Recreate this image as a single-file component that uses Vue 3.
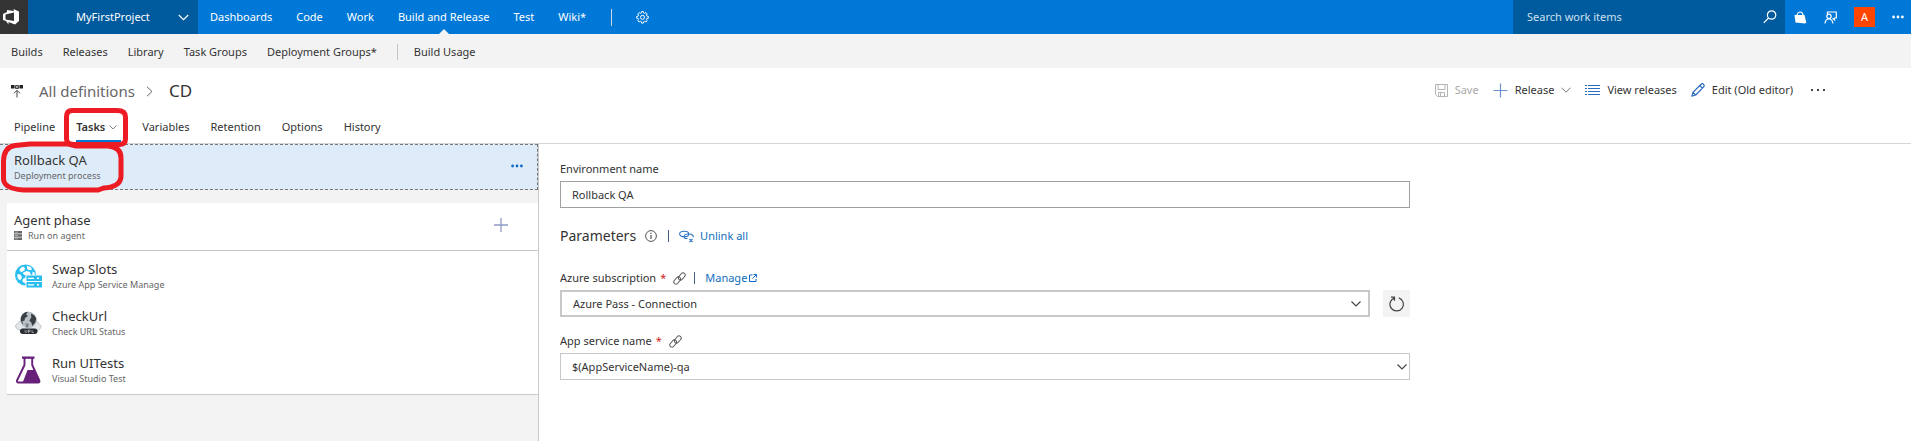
<script setup>
import { ref } from 'vue'

const mainNav = [
  { label: 'Dashboards' },
  { label: 'Code' },
  { label: 'Work' },
  { label: 'Build and Release', active: true },
  { label: 'Test' },
  { label: 'Wiki*' },
]
const subNav = ['Builds', 'Releases', 'Library', 'Task Groups', 'Deployment Groups*']
const tabsAfter = ['Variables', 'Retention', 'Options', 'History']
const tasks = [
  { icon: 'azure', name: 'Swap Slots', kind: 'Azure App Service Manage' },
  { icon: 'globe', name: 'CheckUrl', kind: 'Check URL Status' },
  { icon: 'flask', name: 'Run UITests', kind: 'Visual Studio Test' },
]
const environment = ref('Rollback QA')
const subscription = ref('Azure Pass - Connection')
const service = ref('$(AppServiceName)-qa')
</script>

<template>
  <div class="page">
    <header class="topbar">
      <a class="logo" href="#" aria-label="Home">
        <svg width="16" height="16" viewBox="0 0 16 16"><path fill="#fff" fill-rule="evenodd" d="M0 5 4 3V1L11 2 10.500 0 16 2.500V12L12 15.500 5.500 13V15.500L3 12 0 11ZM2.500 5.500V10.600L11 12V3.500Z"/></svg>
      </a>
      <button class="project" type="button">
        <span>MyFirstProject</span>
        <svg width="11" height="7" viewBox="0 0 11 7"><path class="line" d="M.8 1 5.5 5.6 10.2 1"/></svg>
      </button>
      <nav class="main-nav">
        <a v-for="n in mainNav" :key="n.label" href="#" :class="{ active: n.active }">{{ n.label }}</a>
        <span class="divider"></span>
        <button class="gear" type="button" aria-label="Settings">
          <svg width="13" height="13" viewBox="0 0 13 13"><path fill="none" stroke="#fff" stroke-width="1" stroke-linejoin="round" d="M5.600.600h1.800l.3 1.400.9.4 1.300-.8 1.300 1.300-.8 1.300.4.9 1.500.3v1.800l-1.500.3-.4.9.8 1.300-1.300 1.300-1.300-.8-.9.4-.3 1.500H5.600l-.3-1.500-.9-.4-1.300.8-1.300-1.300.8-1.300-.4-.9L.7 7.200V5.400l1.500-.3.4-.9-.8-1.300 1.300-1.300 1.300.8.9-.4Z"/><circle cx="6.500" cy="6.300" r="2" fill="none" stroke="#fff"/></svg>
        </button>
      </nav>
      <div class="search">
        <input type="text" placeholder="Search work items" aria-label="Search work items" />
        <svg width="14" height="14" viewBox="0 0 14 14"><circle class="line" cx="8.600" cy="5" r="4.200"/><path class="line" d="M5.500 8 .8 12.800"/></svg>
      </div>
      <div class="account">
        <button type="button" aria-label="Marketplace">
          <svg width="13" height="13" viewBox="0 0 13 13"><path fill="#fff" d="M.500 4 10.500 4 12.300 11.500 11 12.500 1.500 11.500Z"/><path fill="none" stroke="#fff" stroke-width="1.200" d="M3 4.500C3 2.500 5 .8 6.500 1 8.400 1.300 9 3 9 4.500"/></svg>
        </button>
        <button type="button" aria-label="Feedback">
          <svg width="13" height="13" viewBox="0 0 13 13"><path class="line" d="M3.500 3V1H12.300V7H10.500V9L8.500 7.200"/><circle class="line" cx="5" cy="5.300" r="2.200"/><path class="line" d="M1 12.500C1.300 9.500 3 8 5 8s3.500 1.500 4 4.500"/></svg>
        </button>
        <button class="avatar" type="button">A</button>
        <button type="button" aria-label="More">
          <svg width="12" height="4" viewBox="0 0 12 4"><g fill="#fff"><circle cx="1.600" cy="2" r="1.400"/><circle cx="6" cy="2" r="1.400"/><circle cx="10.400" cy="2" r="1.400"/></g></svg>
        </button>
      </div>
    </header>

    <nav class="sub-nav">
      <a v-for="s in subNav" :key="s" href="#">{{ s }}</a>
      <a class="separated" href="#">Build Usage</a>
    </nav>

    <div class="title-row">
      <svg class="release-icon" width="12" height="13" viewBox="0 0 12 13"><path fill="#222" d="M0 0h3.500v3.500H0ZM8.500 0H12v3.500H8.500Z"/><path fill="none" stroke="#444" d="M3.500 2h5M4.500.500h3v3h-3ZM6 12.500V5.500M3 8.300 6 5.300l3 3"/></svg>
      <a class="crumb" href="#">All definitions</a>
      <svg class="crumb-arrow" width="7" height="11" viewBox="0 0 7 11"><path fill="none" stroke="#666" d="M1 .8 6 5.500 1 10.200"/></svg>
      <h1>CD</h1>
      <div class="toolbar">
        <button class="save" type="button" disabled>
          <svg width="13" height="13" viewBox="0 0 13 13"><path fill="none" stroke="#b4b4b4" d="M.500.500h12v12h-10l-2-2ZM3 .500v5h7v-5M3.500 12.500v-4h6v4M5.500 9v3"/></svg>
          Save
        </button>
        <button class="release" type="button">
          <svg width="15" height="15" viewBox="0 0 15 15"><path fill="none" stroke="#6f93cf" stroke-width="1.200" d="M7.500.500v14M.500 7.500h14"/></svg>
          Release
          <svg width="10" height="6" viewBox="0 0 10 6"><path fill="none" stroke="#777" d="M.500.700 5 5.200 9.500.700"/></svg>
        </button>
        <button class="view" type="button">
          <svg width="15" height="11" viewBox="0 0 15 11"><path fill="none" stroke="#2b6cc4" d="M0 .500h2M3 .500h12M0 3.500h2M3 3.500h12M0 6.500h2M3 6.500h12M0 9.500h2M3 9.500h12"/></svg>
          View releases
        </button>
        <button class="edit" type="button">
          <svg width="14" height="14" viewBox="0 0 14 14"><path fill="none" stroke="#2464bd" stroke-width="1.100" stroke-linejoin="round" d="M.800 13.200 2 9.300 9.800 1.500c1-1 2-1 2.800-.2s.8 1.800-.2 2.800L4.700 12ZM2 9.300 4.700 12M8.800 2.500l2.700 2.700"/></svg>
          Edit (Old editor)
        </button>
        <button class="more" type="button" aria-label="More actions">
          <svg width="14" height="2" viewBox="0 0 14 2"><path fill="#444" d="M0 0h2v2H0ZM6 0h2v2H6ZM12 0h2v2h-2Z"/></svg>
        </button>
      </div>
    </div>

    <nav class="tabs">
      <a href="#">Pipeline</a>
      <a class="current" href="#">
        Tasks
        <svg width="8" height="5" viewBox="0 0 8 5"><path fill="none" stroke="#888" d="M.500.500 4 4 7.500.500"/></svg>
        <svg class="mark" width="66" height="40" viewBox="0 0 66 40" aria-hidden="true"><path d="M9 2.500H54Q62.500 2.500 62.500 9V31Q62.500 36.500 56 36.500H11Q3.500 36.500 3.500 31V9Q3.500 2.500 9 2.500Z"/></svg>
      </a>
      <a v-for="t in tabsAfter" :key="t" href="#">{{ t }}</a>
    </nav>

    <main class="body">
      <section class="left">
        <div class="process">
          <div class="text">
            <h2>Rollback QA</h2>
            <p>Deployment process</p>
          </div>
          <button type="button" aria-label="Process options">
            <svg width="12" height="4" viewBox="0 0 12 4"><g fill="#1068c8"><circle cx="1.600" cy="2" r="1.400"/><circle cx="6" cy="2" r="1.400"/><circle cx="10.400" cy="2" r="1.400"/></g></svg>
          </button>
          <svg class="mark" width="126" height="52" viewBox="0 0 126 52" aria-hidden="true"><path d="M15 4.500 30 3H68L76 5H108Q121 6 121 17V36Q120 46 104 47L98 49H24Q4 48 3.500 38V20Q4 6 15 4.500Z"/></svg>
        </div>
        <div class="card">
          <div class="phase">
            <div class="text">
              <h2>Agent phase</h2>
              <p>
                <svg width="8" height="9" viewBox="0 0 8 9"><path fill="#666" d="M0 0h8v2.400H0ZM0 3.300h8v2.400H0ZM0 6.600h8V9H0Z"/><path stroke="#ddd" stroke-width=".6" d="M1 1.200h3M1 4.500h3M1 7.800h3"/></svg>
                Run on agent
              </p>
            </div>
            <button type="button" aria-label="Add task">
              <svg width="14" height="14" viewBox="0 0 14 14"><path fill="none" stroke="#8f9bc8" stroke-width="1.300" d="M7 0v14M0 7h14"/></svg>
            </button>
          </div>
          <ul>
            <li v-for="t in tasks" :key="t.name">
              <svg v-if="t.icon === 'azure'" width="27" height="28" viewBox="0 0 27 28">
                <circle cx="10.500" cy="13" r="10.500" fill="#29bdf0"/>
                <path fill="#fff" d="M5 6.500 8 4.500 10 6 9.500 8.500 6.500 10 4.500 9ZM12 3.800l4 1.500 1 2.500-3 .5-2-1.500ZM11.500 9l3.500 1 .8 3H9.500L7.500 11ZM2.500 12l3 .5 1.500 3-1.500 2.500-2-.5-1.200-2.500ZM17.500 9.500l2 1 .3 2.500h-2.500ZM8.500 16.500l2.500-1v6l-3-1.200-.8-2Z"/>
                <path fill="#fff" d="M10.500 12.800H27V26.500H10.500Z"/>
                <path fill="#29bdf0" d="M11.500 13.600H27v5.400H11.500ZM11.500 20H27v5.500H11.500Z"/>
                <path fill="#fff" d="M13 15.800h6v1.100h-6ZM22 15.500h2v1.600h-2ZM13 22.300h6v1.100h-6ZM22 22h2v1.600h-2Z"/>
              </svg>
              <svg v-else-if="t.icon === 'globe'" width="27" height="28" viewBox="0 0 27 28">
                <path fill="#e4e7ea" stroke="#adb3b8" stroke-width=".7" d="M6 11h15l5 6c.5 1.500-1 3-2.500 4L20 22.500H7L2.500 20C1 19 0 17.500.8 16Z"/>
                <circle cx="13.500" cy="11" r="8.300" fill="#b9c1c7"/>
                <path fill="#3a3f44" d="M6.500 7C8.500 3.500 11 3 13 2.800L11 5.500l2 1.500-3 2-.5 2.500-2.500 1 1.500 3C5.500 13.500 5.200 9.500 6.500 7ZM16 4.500l3.500 2 1.800 3-1 4-3 3.500-1-3.500-2-2 2-3Z"/>
                <path fill="#7b8288" d="M10.500 14l3.500 1-1 3.500h-2Z"/>
                <rect x="5" y="19.500" width="17.500" height="5.500" rx="2.700" fill="#2b2e32"/>
                <path fill="none" stroke="#a9adb1" stroke-width=".8" d="M10 21v1.500q0 1 1 1t1-1V21M13.500 24v-3h1.500v1.500h-1.500M17 21v2.500h2"/>
              </svg>
              <svg v-else width="27" height="28" viewBox="0 0 27 28">
                <path fill="#68217a" d="M7 .500h12.500v2.300H7Z"/>
                <path fill="none" stroke="#68217a" stroke-width="1.900" stroke-linejoin="round" d="M9.500 2v7L2 24.500Q1.500 26.500 3.500 26.500H23Q25 26.500 24.300 24.500L17.200 9V2"/>
                <path fill="#68217a" d="M12.500 14h7l5 11.500-1 1.500H7.500Z"/>
              </svg>
              <div class="text">
                <h3>{{ t.name }}</h3>
                <p>{{ t.kind }}</p>
              </div>
            </li>
          </ul>
        </div>
      </section>

      <form class="right" @submit.prevent>
        <label class="caption" for="env">Environment name</label>
        <input id="env" v-model="environment" type="text" />

        <div class="params">
          <h2>Parameters</h2>
          <svg width="12" height="12" viewBox="0 0 12 12"><circle cx="6" cy="6" r="5.400" fill="none" stroke="#555"/><path stroke="#444" stroke-width="1.100" d="M6 5v4M6 2.800v1.300"/></svg>
          <span class="bar"></span>
          <a href="#">
            <svg width="15" height="13" viewBox="0 0 15 13"><g fill="none" stroke="#2f72c4" stroke-width="1.100"><ellipse cx="5.200" cy="4" rx="4.600" ry="2.800"/><path d="M6 8.500C4 6.500 5.500 4 8.500 4h2c2.500 0 4 1.500 3.800 3.300M6 8.500h2.500M10.500 9l3 3M13.500 9l-3 3"/></g></svg>
            Unlink all
          </a>
        </div>

        <div class="caption">
          <label for="sub">Azure subscription</label><span class="star">*</span>
          <svg width="13" height="13" viewBox="0 0 13 13"><g fill="none" stroke="#555" stroke-width="1" stroke-linejoin="round"><rect x="4.800" y="2.300" width="8" height="4.400" rx="2.200" transform="rotate(-50 8.800 4.500)"/><rect x=".2" y="6.300" width="8" height="4.400" rx="2.200" transform="rotate(-50 4.200 8.500)"/></g></svg>
          <span class="bar"></span>
          <a href="#">Manage<svg width="8" height="8" viewBox="0 0 8 8"><path fill="none" stroke="#1068c8" d="M3.500 1H.500v6.500H7V5M4.500.500h3v3M7.500.500 3.500 4.500"/></svg></a>
        </div>
        <div class="field-row">
          <div class="picker framed">
            <select id="sub" v-model="subscription"><option>Azure Pass - Connection</option></select>
            <svg width="10" height="6" viewBox="0 0 10 6"><path fill="none" stroke="#444" stroke-width="1.200" d="M.500.500 5 5 9.500.500"/></svg>
          </div>
          <button class="refresh" type="button" aria-label="Refresh">
            <svg width="16" height="16" viewBox="0 0 16 16"><path fill="none" stroke="#444" stroke-width="1.200" d="M9.800 1.900A6.700 6.700 0 1 1 5 2.100M2 1.100H5.500V4.800"/></svg>
          </button>
        </div>

        <div class="caption">
          <label for="svc">App service name</label><span class="star">*</span>
          <svg width="13" height="13" viewBox="0 0 13 13"><g fill="none" stroke="#555" stroke-width="1" stroke-linejoin="round"><rect x="4.800" y="2.300" width="8" height="4.400" rx="2.200" transform="rotate(-50 8.800 4.500)"/><rect x=".2" y="6.300" width="8" height="4.400" rx="2.200" transform="rotate(-50 4.200 8.500)"/></g></svg>
        </div>
        <div class="picker plain">
          <select id="svc" v-model="service"><option>$(AppServiceName)-qa</option></select>
          <svg width="10" height="6" viewBox="0 0 10 6"><path fill="none" stroke="#444" stroke-width="1.200" d="M.500.500 5 5 9.500.500"/></svg>
        </div>
      </form>
    </main>
  </div>
</template>

<style>
body {
  margin: 0;
  background: #fff;
}
</style>

<style scoped>
.page {
  display: flex;
  flex-direction: column;
  min-height: 100vh;
  font-family: "Noto Sans", "Open Sans", sans-serif;
  font-size: 11px;
  line-height: 16px;
  color: #333;
}
.page * {
  box-sizing: border-box;
}
h1, h2, h3, p, ul {
  margin: 0;
  padding: 0;
  font-weight: 400;
  list-style: none;
}
a {
  color: inherit;
  text-decoration: none;
  white-space: nowrap;
}
button {
  display: flex;
  align-items: center;
  padding: 0;
  border: 0;
  background: none;
  font: inherit;
  color: inherit;
  white-space: nowrap;
}
svg {
  flex: none;
}
.line {
  fill: none;
  stroke: #fff;
  stroke-width: 1.2;
}

.topbar {
  display: flex;
  height: 34px;
  background: #0078d7;
  color: #fff;
}
.logo {
  display: flex;
  align-items: center;
  width: 28px;
  padding-left: 3px;
  background: #333;
}
.project {
  justify-content: space-between;
  width: 170px;
  padding: 0 9px 0 48px;
  background: #005a9e;
}
.main-nav {
  display: flex;
  align-items: center;
  gap: 24px;
  padding-left: 12px;
}
.main-nav a {
  position: relative;
  line-height: 34px;
}
.main-nav a.active::after {
  content: "";
  position: absolute;
  left: 50%;
  bottom: 0;
  margin-left: -5px;
  border: 5px solid transparent;
  border-top: 0;
  border-bottom-color: #f3f3f3;
}
.main-nav .divider {
  width: 1px;
  height: 17px;
  margin-left: 1px;
  background: #cfd8e0;
}
.search {
  display: flex;
  align-items: center;
  width: 272px;
  margin-left: auto;
  padding: 0 8px 0 14px;
  background: #005a9e;
}
.search input {
  flex: 1;
  min-width: 0;
  padding: 0;
  border: 0;
  background: none;
  font: inherit;
  color: #fff;
}
.search input::placeholder {
  color: #cde0ee;
  opacity: 1;
}
.account {
  display: flex;
  align-items: center;
  gap: 17px;
  padding: 0 7px 0 9px;
}
.account .avatar {
  justify-content: center;
  width: 21px;
  height: 20px;
  background: #ff4500;
}

.sub-nav {
  display: flex;
  align-items: center;
  gap: 20px;
  height: 34px;
  padding-top: 2px;
  padding-left: 11px;
  background: #f3f3f3;
}
.sub-nav .separated {
  padding-left: 16px;
  border-left: 1px solid #c4c4c4;
}

.title-row {
  display: flex;
  align-items: center;
  height: 46px;
  padding: 0 86px 0 11px;
}
.crumb {
  margin-left: 16px;
  font-size: 15px;
  line-height: 20px;
  color: #666;
}
.crumb-arrow {
  margin: 0 16px 0 11px;
}
h1 {
  font-size: 17px;
  line-height: 20px;
}
.toolbar {
  display: flex;
  align-items: center;
  gap: 14px;
  margin-left: auto;
  padding-bottom: 2px;
}
.toolbar button {
  gap: 7px;
}
.toolbar .save {
  color: #aaa;
}
.toolbar .more {
  padding-left: 4px;
}

.tabs {
  display: flex;
  gap: 21px;
  height: 30px;
  padding-left: 14px;
  border-bottom: 1px solid #d6d6d6;
}
.tabs a {
  line-height: 26px;
}
.tabs .current {
  position: relative;
  display: flex;
  align-items: center;
  gap: 4px;
  padding-right: 4px;
  border-bottom: 3px solid #0078d7;
  font-weight: 600;
}
.mark {
  position: absolute;
  z-index: 2;
  pointer-events: none;
}
.mark path {
  fill: none;
  stroke: #ed1c24;
  stroke-width: 5;
}
.tabs .mark {
  left: -13px;
  top: -6px;
}

.body {
  display: flex;
  flex: 1;
}
.left {
  flex: 0 0 539px;
  border-right: 1px solid #c8c8c8;
  background: #f3f3f3;
}
.process {
  position: relative;
  display: flex;
  align-items: center;
  justify-content: space-between;
  height: 46px;
  padding: 0 14px;
  border: 1px dashed #777;
  border-left: 0;
  background: #deecf9;
}
.process button, .phase button {
  padding-bottom: 3px;
}
.process .mark {
  left: 0;
  top: -4px;
}
.left h2, .left h3 {
  font-size: 13px;
  line-height: 17px;
}
.left p {
  font-size: 9px;
  line-height: 13px;
  color: #666;
}
.card {
  margin: 13px 0 0 7px;
  border-bottom: 1px solid #c8c8c8;
  background: #fff;
}
.phase {
  display: flex;
  align-items: center;
  justify-content: space-between;
  height: 48px;
  padding: 0 30px 0 7px;
  border-bottom: 1px solid #c8c8c8;
}
.phase p {
  display: flex;
  align-items: center;
  gap: 6px;
}
.card ul {
  padding: 1px 0;
}
.card li {
  display: flex;
  align-items: center;
  gap: 10px;
  height: 47px;
  padding-left: 8px;
}

.right {
  flex: 1;
  max-width: 893px;
  padding: 13px 22px 0 21px;
}
.caption {
  display: flex;
  align-items: center;
  height: 24px;
}
.caption svg {
  margin-left: 7px;
}
.caption a {
  color: #106ebe;
}
.caption a svg {
  margin-left: 2px;
}
.star {
  margin-left: 4px;
  color: #c22;
}
.bar {
  width: 1px;
  height: 12px;
  margin: 0 10px 0 8px;
  background: #46617f;
}
.right > input {
  display: block;
  width: 100%;
  height: 27px;
  padding: 0 11px;
  border: 1px solid #a0a0a0;
  font: inherit;
  color: inherit;
}
.params {
  display: flex;
  align-items: center;
  height: 58px;
  padding-bottom: 2px;
}
.params h2 {
  margin-right: 9px;
  font-size: 14px;
}
.params .bar {
  margin-left: 11px;
}
.params a {
  display: flex;
  align-items: center;
  gap: 6px;
  color: #106ebe;
}
.field-row {
  display: flex;
  gap: 13px;
  margin-bottom: 12px;
}
.picker {
  position: relative;
  flex: 1;
}
.picker select {
  display: block;
  width: 100%;
  height: 27px;
  padding: 1px 11px 0;
  border: 1px solid #c8c8c8;
  border-radius: 0;
  background: #fff;
  font: inherit;
  color: inherit;
  appearance: none;
}
.picker.framed select {
  border-width: 2px;
}
.picker svg {
  position: absolute;
  right: 9px;
  top: 11px;
}
.picker.plain svg {
  right: 3px;
}
.refresh {
  justify-content: center;
  width: 27px;
  height: 27px;
  background: #f3f3f3;
}
</style>
